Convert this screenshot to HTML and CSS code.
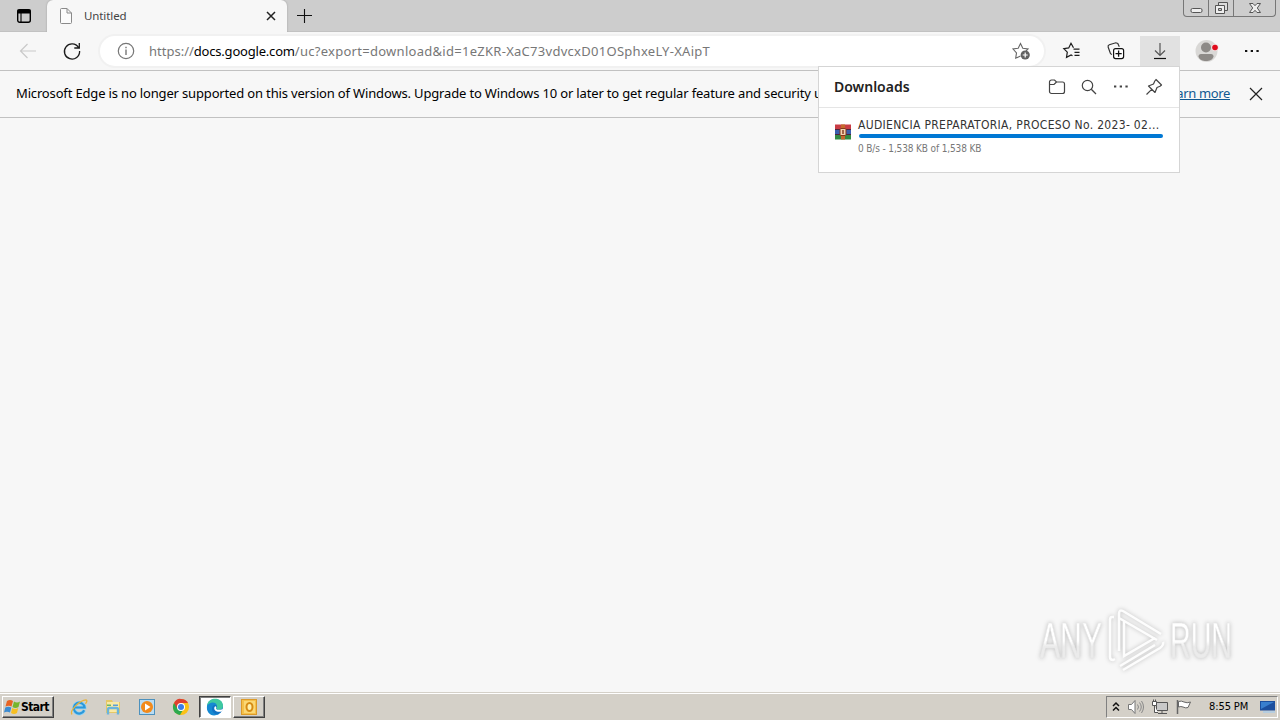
FILE: index.html
```
<!DOCTYPE html>
<html lang="en">
<head>
	<meta charset="utf-8">
	<title>Untitled</title>
	<link rel="stylesheet" href="styles.css">
</head>

<body>
<div class="tabstrip">
	<svg class="tabmenu" width="16" height="16" viewBox="0 0 16 16"><rect x="1.700" y="1.700" width="12.600" height="12.600" rx="2" fill="none" stroke="#000" stroke-width="1.400"/><path d="M2 2h12v3H2z"/><path d="M2 2h12v3H2zM5 5v9" stroke="#000" stroke-width="1.100"/></svg>
	<div class="tab">
		<svg width="14" height="16" viewBox="0 0 14 16"><path d="M1.500 1.500a1 1 0 0 1 1-1H8l4.500 4.500v9.500a1 1 0 0 1-1 1h-9a1 1 0 0 1-1-1zM8 .5V5h4.500" fill="#fbfbfb" stroke="#8a8a8a"/></svg>
		<span class="tabtitle">Untitled</span>
		<svg class="tabclose" width="10" height="10" viewBox="0 0 10 10"><path d="M1 1l8 8M9 1L1 9" stroke="#222" stroke-width="1.500"/></svg>
	</div>
	<svg class="newtab" width="16" height="16" viewBox="0 0 16 16"><path d="M8.500 1v14M1 7.500h15" stroke="#111" stroke-width="1.100"/></svg>
	<div class="winbuttons">
		<div class="winbtn"><svg width="13" height="16" viewBox="0 0 13 16"><rect x="1" y="8.500" width="11" height="4" rx="1.500" fill="#eee" stroke="#555"/></svg></div>
		<div class="winbtn"><svg width="15" height="16" viewBox="0 0 15 16"><path d="M4.500 2.500h9v8h-9z" fill="#ddd" stroke="#555"/><path d="M1.500 5.500h9v8h-9z" fill="#eee" stroke="#555"/><path d="M4.500 8.500h3v2h-3z" fill="#ccc" stroke="#555"/></svg></div>
		<div class="winbtn wide"><svg width="14" height="16" viewBox="0 0 14 16"><path d="M1.500 3.500h3.500l2 2.200 2-2.200h3.500L9.300 8l3.200 4.500H9L7 10.300l-2 2.200H1.500L4.700 8z" fill="#eee" stroke="#555"/></svg></div>
	</div>
</div>

<div class="toolbar">
	<svg class="back" width="18" height="16" viewBox="0 0 18 16"><path d="M17 8H2M8.500 1L1.500 8l7 7" fill="none" stroke="#c9c9c9" stroke-width="1.200"/></svg>
	<svg class="reload" width="18" height="18" viewBox="0 0 18 18"><path d="M15.500 5.500A7.600 7.600 0 1 0 16.600 9M16.300 1v5h-5" fill="none" stroke="#1b1b1b" stroke-width="1.300"/></svg>
	<div class="address">
		<svg width="18" height="18" viewBox="0 0 18 18"><circle cx="9" cy="9" r="7.700" fill="none" stroke="#777" stroke-width="1.200"/><path d="M9 7.500V13M9 4.700v1.500" stroke="#777" stroke-width="1.400"/></svg>
		<div class="url"><span class="scheme">https://</span><span class="host">docs.google.com</span><span class="path">/uc?export=download&amp;id=1eZKR-XaC73vdvcxD01OSphxeLY-XAipT</span></div>
		<svg width="18" height="18" viewBox="0 0 18 18"><path d="M8.500 14l-4.800 2.200.8-5.300L1 7l5.200-.8L8.500 1.500l2.300 4.700L16 7l-2 2" fill="none" stroke="#666" stroke-width="1.100"/><circle cx="13.200" cy="13" r="4.600" fill="#606060"/><path d="M13.200 10.500v5M10.700 13h5" stroke="#fff" stroke-width="1.200"/></svg>
	</div>
	<div class="tool"><svg width="18" height="18" viewBox="0 0 18 18"><path d="M10.500 7.200h6M11.500 10.300h5M11.500 13.400h5M10.500 5.800L8 1.300 5.700 5.900l-4.900.8 3.500 3.500-.8 5.200 4.600-2.500 1.400.8" fill="none" stroke="#1b1b1b" stroke-width="1.200"/></svg></div>
	<div class="tool"><svg width="18" height="18" viewBox="0 0 18 18"><rect x="6.600" y="6.600" width="10" height="10" rx="2" fill="#fff" stroke="#111" stroke-width="1.200"/><path d="M11.600 8.500v6.200M8.500 11.600h6.200" stroke="#111" stroke-width="1.300"/><path d="M5 12.500l-1.500-.8-2.300-6.400a2 2 0 0 1 1.100-2.500l6.500-2 2 .7 1.500 3.200" fill="none" stroke="#333" stroke-width="1.200"/></svg></div>
	<div class="tool active"><svg width="14" height="18" viewBox="0 0 14 18"><path d="M7 1v12M2 8.500l5 5 5-5" fill="none" stroke="#555" stroke-width="1.200"/><path d="M1 16.500h12" stroke="#111" stroke-width="1.200"/></svg></div>
	<div class="tool profile"><svg width="24" height="24" viewBox="0 0 24 24"><circle cx="10.500" cy="12" r="11" fill="#d9d8d6"/><circle cx="10" cy="8.500" r="5" fill="#8d8a87"/><path d="M2.500 17.500q0-2.500 2.500-2.500h10q2.500 0 2.500 2.500c-1 3.500-4 4.500-7.500 4.500s-6.500-1-7.500-4.500z" fill="#8d8a87"/><circle cx="19" cy="8.500" r="3.600" fill="#f4dedf"/><circle cx="19" cy="8.500" r="2.800" fill="#e00b1c"/></svg></div>
	<div class="tool more"><svg width="14" height="4" viewBox="0 0 14 4"><path d="M0 1h2.300v2H0zM5.700 1H8v2H5.700zM11.400 1h2.300v2h-2.300z" fill="#111"/></svg></div>
</div>

<div class="infobar">
	<span class="message">Microsoft Edge is no longer supported on this version of Windows. Upgrade to Windows 10 or later to get regular feature and security u</span>
	<a class="learn" href="#">Learn more</a>
	<svg width="14" height="14" viewBox="0 0 14 14"><path d="M1 1l12 12M13 1L1 13" stroke="#222" stroke-width="1.200"/></svg>
</div>

<div class="content">
	<svg class="watermark" width="220" height="74" viewBox="0 0 220 74">
		<defs>
			<linearGradient id="fade" x1="0" y1="0" x2="0" y2="1">
				<stop offset=".5" stop-color="#fff"/>
				<stop offset=".6" stop-color="#ebebeb"/>
			</linearGradient>
		</defs>
		<g class="mark">
			<text x="12" y="54" textLength="62" lengthAdjust="spacingAndGlyphs">ANY</text>
			<text x="142" y="54" textLength="62" lengthAdjust="spacingAndGlyphs">RUN</text>
			<path class="play" d="M86 13h-2q-2 0-2 3v37q0 3 3 3l2-1M91 47V10q0-5 4-3l38 23M91 14l38 22M96 17v35l31-18M95 66l37-22q4-3 3-6M92 62l35-21"/>
		</g>
	</svg>
</div>

<div class="taskbar">
	<div class="start">
		<svg width="17" height="16" viewBox="0 0 17 16"><path d="M3 2q3-2 6 0L7.500 7.500Q5 6 1.500 7.500z" fill="#e86322"/><path d="M10 2.500q3 2 6 0L14.500 8q-3 2-6 0z" fill="#76b52d"/><path d="M1.300 8.500q3-1.500 6 0L6 13.500q-3-1.500-6 0z" fill="#3b8bd1"/><path d="M8.200 9q3 2 6 0L13 14q-3 2-6 0z" fill="#f7bf21"/></svg>
		<span>Start</span>
	</div>
	<div class="quick">
		<svg width="18" height="18" viewBox="0 0 18 18"><path d="M14.200 12.300A5.400 5.400 0 1 1 14.600 9.500H5" fill="none" stroke="#8fd3f4" stroke-width="3.600"/><path d="M14.200 12.300A5.400 5.400 0 1 1 14.600 9.500H5" fill="none" stroke="#2d98da" stroke-width="2.200"/><path d="M2 16.500C-1 13 10 2 16 1.800c2 .5 0 3.500-.6 4" fill="none" stroke="#e9b43c" stroke-width="1.300"/></svg>
		<svg width="18" height="18" viewBox="0 0 18 18"><path d="M2 2h6l1 2h7v11H2z" fill="#e6c866"/><path d="M3 4h12v10H3z" fill="#f9e9a4"/><path d="M3 6.500h4v1.500H3z" fill="#6cb963"/><path d="M9 6.500h5v1.500H9z" fill="#5a9ed8"/><path d="M4 16.500v-5q0-1.500 1.500-1.500h7q1.500 0 1.500 1.500v5" fill="none" stroke="#6ab4dc" stroke-width="2.400"/></svg>
		<svg width="18" height="18" viewBox="0 0 18 18"><rect x="1.500" y="1.500" width="15" height="15" fill="#b9dcf3" stroke="#4d91bd"/><circle cx="9" cy="9" r="6" fill="#f28a1b"/><path d="M7 5.500l5.500 3.500L7 12.500z" fill="#fff"/></svg>
		<svg width="18" height="18" viewBox="0 0 18 18"><circle cx="9" cy="9" r="8" fill="#fbc116"/><path d="M2 5a8 8 0 0 0 6 12l3.500-6z" fill="#2da94f"/><path d="M2 5Q5 0 9 1q5 0 7 4H9v4L5 10z" fill="#df3f30"/><circle cx="9" cy="9" r="4" fill="#fff"/><circle cx="9" cy="9" r="3" fill="#3b7de8"/></svg>
	</div>
	<div class="task pressed"><svg width="18" height="18" viewBox="0 0 18 18"><circle cx="9" cy="9" r="8" fill="#1173c4"/><path d="M1 8C2-2 17-1 17 8c0 4-5 4.500-7 3 2-2 1-5-2-5-3 0-6 1-7 2z" fill="#3fc9a0"/><path d="M1 8c2-4 8-5 10-1-3-1-5 1-5 4 0 4 4 6 7 5-7 4-13-1-12-8z" fill="#1689d2"/><path d="M8.500 9c1-1.500 2.500-.5 1.500 1.700 1.500 1.800 5 1.300 7.500 0l-1.500 2.500c-4 1.500-9-.2-7.500-4.200z" fill="#fff"/></svg></div>
	<div class="task"><svg width="18" height="18" viewBox="0 0 18 18"><rect x="1.500" y="1.500" width="15" height="15" fill="#f5c04a" stroke="#dc9a28"/><path d="M4 3h11v12H4z" fill="#fbd875"/><ellipse cx="9.500" cy="9" rx="3" ry="4" fill="#fff1ae" stroke="#d68b14" stroke-width="2"/></svg></div>
	<div class="tray">
		<svg width="10" height="14" viewBox="0 0 10 14"><path d="M2 6l3-3 3 3M2 10.500l3-3 3 3" fill="none" stroke="#111" stroke-width="1.500"/></svg>
		<svg width="18" height="16" viewBox="0 0 18 16"><path d="M1.500 5.500h3L8 1.500v13l-3.500-4h-3z" fill="#fff" stroke="#777"/><path d="M10.500 5.500q2 2.500 0 5M12.500 3.500q3.500 4.500 0 9M14.500 2q4 6 0 12" fill="none" stroke="#888"/></svg>
		<svg width="18" height="16" viewBox="0 0 18 16"><path d="M5.500 3.500h11v8h-11zM7 14.500h9M11 11.500v3" fill="#c9c9c9" stroke="#555"/><path d="M1.500 2.500h4v4h-4zM2.500.5v2M4.500.5v2M3.500 7v6.500H7" fill="#fff" stroke="#555"/></svg>
		<svg width="18" height="16" viewBox="0 0 18 16"><path d="M2.500 1v14" stroke="#666" stroke-width="1.500"/><path d="M3.500 2.500q3-1 5.500.5 3 1.500 6.500 0L13 8.500q-2 1-5-.5-2-1-4.500 0z" fill="#fff" stroke="#666"/></svg>
		<span class="clock">8:55 PM</span>
		<svg width="16" height="16" viewBox="0 0 16 16"><path d="M0 2h15v9.500H0z" fill="#1c4f9e"/><path d="M1 3h13L1 10z" fill="#397fce"/><path d="M3 12h12v2H3z" fill="#b5cde0"/></svg>
	</div>
</div>

<!-- downloads flyout -->
<div class="downloads">
	<div class="dlhead">
		<span class="dltitle">Downloads</span>
		<svg width="18" height="18" viewBox="0 0 18 18"><path d="M1.500 4a2 2 0 0 1 2-2h3l2 2h6a2 2 0 0 1 2 2v7.500a2 2 0 0 1-2 2h-11a2 2 0 0 1-2-2zM1.500 6.500h4.500L8.500 4" fill="none" stroke="#444" stroke-width="1.200"/></svg>
		<svg width="16" height="16" viewBox="0 0 16 16"><circle cx="6.500" cy="6.500" r="5.200" fill="none" stroke="#444" stroke-width="1.200"/><path d="M10.300 10.300L15 15" stroke="#444" stroke-width="1.300"/></svg>
		<svg width="14" height="4" viewBox="0 0 14 4"><path d="M0 .5h2.300v2H0zM5.700.5H8v2H5.700zM11.400.5h2.300v2h-2.300z" fill="#444"/></svg>
		<svg width="18" height="18" viewBox="0 0 18 18"><path d="M11 1.500l5.500 5.500-1.500 1.300-3 1.200-2 5-6.500-6.500 5-2 1.300-3zM6.700 11.300L1.500 16.500" fill="none" stroke="#444" stroke-width="1.200" stroke-linejoin="round"/></svg>
	</div>
	<div class="dlitem">
		<svg width="18" height="18" viewBox="0 0 18 18"><path d="M1 1.500h16v5H1z" fill="#c93c45"/><path d="M1 6.500h16v5H1z" fill="#3a5fae"/><path d="M1 11.500h16v5H1z" fill="#318b43"/><path d="M7 1.500h4v15H7z" fill="#c4692d"/><path d="M1 6.500h16M1 11.500h16" stroke="#4c2541"/><rect x="6" y="5.500" width="6" height="7" rx="1" fill="#f3d2b0" stroke="#843718"/><path d="M9 7v4" stroke="#8a3f24" stroke-width="1.500"/></svg>
		<div class="dlinfo">
			<div class="dlname">AUDIENCIA PREPARATORIA, PROCESO No. 2023- 02...</div>
			<div class="progress"></div>
			<div class="dlstatus">0 B/s - 1,538 KB of 1,538 KB</div>
		</div>
	</div>
</div>
</body>
</html>
```

FILE: styles.css
```
* {box-sizing: border-box}
body {margin: 0; height: 720px; overflow: hidden; display: flex; flex-direction: column; background: #f7f7f7; font: 13px "Noto Sans", sans-serif; color: #111}
svg {display: block; flex: none; overflow: visible}
span, .dlname, .dlstatus, .learn {white-space: nowrap}

.tabstrip {height: 32px; flex: none; display: flex; background: #cdcdcd; border-bottom: 1px solid #c2c2c2}
.tabmenu {margin: 8px 7px 0 16px}
.tab {width: 240px; height: 32px; margin-left: 8px; padding: 0 11px 0 12px; display: flex; align-items: center; background: #f7f7f7; border-radius: 6px 6px 0 0; box-shadow: 0 0 2px #999; clip-path: inset(0 -3px 0 -3px)}
.tabtitle {margin-left: 11px; padding-bottom: 2px; font-size: 11.5px; letter-spacing: -.1px; color: #444}
.tabclose {margin-left: auto}
.newtab {margin: 8px 0 0 9px}
.winbuttons {display: flex; height: 17px; margin: 0 4px 0 auto; border: 1px solid #777; border-top: 0; border-radius: 0 0 4px 4px}
.winbtn {width: 25px; display: flex; justify-content: center; border-right: 1px solid #777}
.winbtn.wide {width: 41px; border: 0}

.toolbar {height: 39px; flex: none; display: flex; align-items: center; background: #f7f7f7; border-bottom: 1px solid #c1c1c1}
.back {margin-left: 19px}
.reload {margin-left: 26px}
.address {width: 944px; height: 30px; margin-left: 19px; padding: 0 14px 0 17px; display: flex; align-items: center; background: #fff; border-radius: 15px; box-shadow: 0 0 0 2px #f1f1f1}
.url {flex: 1; margin-left: 14px; display: flex; color: #777}
.host {letter-spacing: -.2px; color: #000}
.path {letter-spacing: .28px}
.tool {width: 40px; height: 30px; margin-left: 4px; display: flex; align-items: center; justify-content: center}
.address + .tool {margin-left: 8px}
.tool.active {background: #e1e1e1}
.tool.profile {margin-left: 8px}
.tool.more {margin-left: 4px}

.infobar {height: 47px; flex: none; display: flex; align-items: center; padding: 0 17px 1px 16px; border-bottom: 1px solid #c1c1c1}
.message {padding-bottom: 2px; letter-spacing: -.16px; color: #000}
.learn {margin-left: auto; margin-right: 19px; padding-bottom: 2px; letter-spacing: -.35px; color: #125991}

.content {flex: 1; display: flex; align-items: flex-end; justify-content: flex-end; padding: 0 32px 14px 0}
.mark {fill: url(#fade); stroke: #e6e6e6; stroke-width: .6; font: 50px "Liberation Sans Narrow", "Liberation Sans", sans-serif; filter: drop-shadow(0 0 2px #bbb)}
.play {fill: none; stroke: #fdfdfd; stroke-width: 2.5}

.taskbar {height: 28px; flex: none; display: flex; align-items: center; padding: 1px 2px 1px; background: #d4d0c8; border-top: 1px solid #d4d0c8; box-shadow: inset 0 1px #fff}
.start, .task {height: 22px; display: flex; align-items: center; border: 1px solid; border-color: #fff #404040 #404040 #fff; box-shadow: inset -1px -1px #808080}
.start {width: 52px; padding-left: 1px; font: bold 12px "DejaVu Sans Condensed", sans-serif; color: #000}
.start span {letter-spacing: -.6px}
.quick {width: 145px; padding-left: 16px; display: flex; gap: 16px}
.task {width: 32px; justify-content: center}
.task + .task {margin-left: 2px}
.task.pressed {background: #fff; border-color: #404040 #fff #fff #404040; box-shadow: inset 1px 1px #808080}
.tray {width: 172px; height: 22px; margin-left: auto; padding-left: 4px; display: flex; align-items: center; gap: 6px; border: 1px solid; border-color: #808080 #fff #fff #808080}
.clock {width: 40px; margin: 0 5px 0 10px; font: 11px "DejaVu Sans Condensed", sans-serif; letter-spacing: -.1px; color: #000}

.downloads {position: absolute; left: 818px; top: 66px; width: 362px; height: 107px; background: #fff; border: 1px solid #d5d5d5}
.dlhead {height: 41px; display: flex; align-items: center; padding: 0 16px 0 15px; border-bottom: 1px solid #e5e5e5}
.dlhead svg {margin-left: 16px}
.dlhead svg + svg {margin-left: 15px}
.dlhead svg + svg + svg {margin-left: 17px}
.dltitle {margin-right: auto; padding-bottom: 2px; font: 600 14px "Noto Sans", sans-serif; color: #222}
.dlitem {display: flex; padding: 8px 16px 0 15px}
.dlitem > svg {margin-top: 7px}
.dlinfo {flex: 1; margin-left: 6px}
.dlname {height: 18px; font: 12px/18px "DejaVu Sans Condensed", sans-serif; letter-spacing: .32px; color: #333}
.progress {height: 4px; margin-left: 1px; background: #0078d4; border-radius: 2px}
.dlstatus {margin-top: 3px; font: 10px/16px "DejaVu Sans Condensed", sans-serif; letter-spacing: -.14px; color: #777}
```
